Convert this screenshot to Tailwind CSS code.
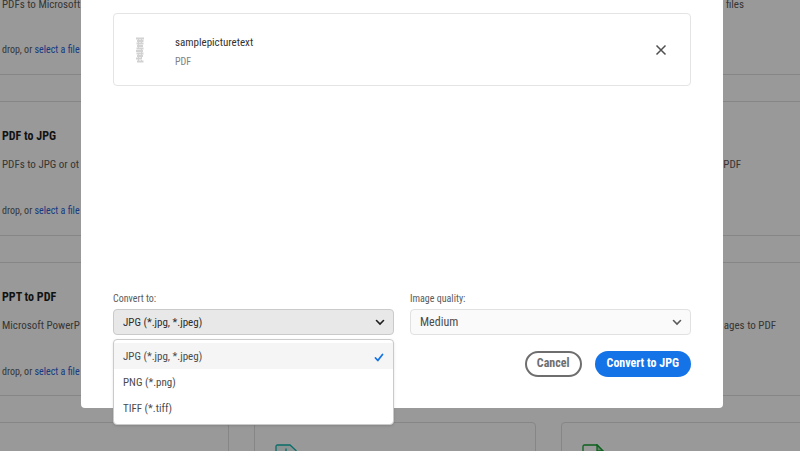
<!DOCTYPE html>
<html lang="en">
<head>
  <meta charset="UTF-8">
  <meta name="viewport" content="width=device-width, initial-scale=1.0">
  <title>Convert to JPG</title>
  <script src="https://cdn.jsdelivr.net/npm/@tailwindcss/browser@4"></script>
</head>
<body class="bg-white text-[#5a5a5a] font-['Roboto_Condensed','Roboto',sans-serif] overflow-hidden">
  <div class="relative h-screen overflow-hidden">

    <!-- Tool cards behind the dialog -->
    <main class="-mt-[60px] -ml-[52px] -mr-[42px] grid grid-cols-3 gap-x-[25px] gap-y-[26px] text-[11px] leading-4">
      <section class="h-[135px] border border-[#e0e0e0] rounded-sm pl-[53px] pt-[56px]">
        <p>PDFs to Microsoft</p>
        <p class="mt-[29px] text-[10px]">drop, or <a href="#" class="text-[#2a62d8]">select a file</a></p>
      </section>
      <section class="h-[135px] border border-[#e0e0e0] rounded-sm"></section>
      <section class="h-[135px] border border-[#e0e0e0] rounded-sm pr-[97px] pt-[56px] text-right">
        <p>files</p>
      </section>

      <section class="h-[135px] border border-[#e0e0e0] rounded-sm pl-[53px] pt-[26px]">
        <h2 class="text-[12px] font-bold text-[#1e1e1e]">PDF to JPG</h2>
        <p class="mt-[13px]">PDFs to JPG or ot</p>
        <p class="mt-[30px] text-[10px]">drop, or <a href="#" class="text-[#2a62d8]">select a file</a></p>
      </section>
      <section class="h-[135px] border border-[#e0e0e0] rounded-sm"></section>
      <section class="h-[135px] border border-[#e0e0e0] rounded-sm pr-[100px] pt-[55px] text-right">
        <p>PDF</p>
      </section>

      <section class="h-[134px] border border-[#e0e0e0] rounded-sm pl-[53px] pt-[26px]">
        <h2 class="text-[12px] font-bold text-[#1e1e1e]">PPT to PDF</h2>
        <p class="mt-[13px]">Microsoft PowerP</p>
        <p class="mt-[30px] text-[10px]">drop, or <a href="#" class="text-[#2a62d8]">select a file</a></p>
      </section>
      <section class="h-[134px] border border-[#e0e0e0] rounded-sm"></section>
      <section class="h-[134px] border border-[#e0e0e0] rounded-sm pr-[65px] pt-[55px] text-right">
        <p>ages to PDF</p>
      </section>

      <section class="h-[135px] border border-[#e0e0e0] rounded-sm"></section>
      <section class="h-[135px] border border-[#e0e0e0] rounded-sm pl-[20px] pt-[21px]">
        <svg class="w-[22px] h-[26px]" viewBox="0 0 22 26" fill="none" stroke="#0fb5ae" stroke-width="1.3">
          <path d="M1 25V2.5Q1 1 2.5 1H15L21 6.5V25Z" fill="#e6f4f3"/>
          <path d="M11 4.5V14M7 10l4 4 4-4"/>
        </svg>
      </section>
      <section class="h-[135px] border border-[#e0e0e0] rounded-sm pl-[20px] pt-[21px]">
        <svg class="w-[22px] h-[26px]" viewBox="0 0 22 26" fill="none" stroke="#12a130" stroke-width="1.3">
          <path d="M1 25V2.5Q1 1 2.5 1H15L21 7V25Z"/>
          <path d="M15 1V7H21Z" fill="#a8dcae"/>
        </svg>
      </section>
    </main>

    <!-- Dialog -->
    <div class="absolute inset-0 bg-black/40">
      <div role="dialog" aria-label="Convert to JPG" class="ml-[81px] mr-[77px] rounded-b-sm bg-white px-8 pt-[13px] pb-[31px]">
        <div class="flex items-center h-[73px] border border-[#e4e4e4] rounded pl-[21px] pr-[23px]">
          <!-- page thumbnail -->
          <svg class="w-[9px] h-[26px]" viewBox="0 0 9 26" fill="none" stroke="#d2d2d2" stroke-width="2">
            <path d="M1 1.5H9M2 4H8.5M1.500 6.5H8.500M2 9H8M1.5 11.5H8.5M1 14H8M1.5 16.5H8.5M2 19H8M1 21.5H7M2 24.5H8.5"/>
            <path d="M3.500 1V25M6.500 2V24" stroke-width="1" stroke-dasharray="2 1"/>
          </svg>
          <div class="ml-[31px] flex-1">
            <p class="mt-[6px] text-[11px] leading-4 text-[#323232]">samplepicturetext</p>
            <p class="mt-[3px] text-[10px] leading-4 text-[#808080]">PDF</p>
          </div>
          <button type="button" aria-label="Remove file">
            <svg class="w-[12px] h-[12px]" viewBox="0 0 12 12" fill="none" stroke="#505050" stroke-width="1.5"><path d="M1.5 1.5l9 9M10.5 1.5l-9 9"/></svg>
          </button>
        </div>

        <div class="mt-[205px] grid grid-cols-2 gap-4">
          <div class="relative">
            <label for="format" class="block text-[10px] leading-4 text-[#5a5a5a]">Convert to:</label>
            <div class="relative mt-[2px]">
              <select id="format" class="block w-full h-[26px] appearance-none rounded border border-[#cacaca] bg-[#e8e8e8] pl-[9px] pt-px text-[11px] leading-4 text-[#2c2c2c]">
                <option>JPG (*.jpg, *.jpeg)</option>
                <option>PNG (*.png)</option>
                <option>TIFF (*.tiff)</option>
              </select>
              <svg class="pointer-events-none absolute right-[9px] top-[10px] w-[10px] h-[7px]" viewBox="0 0 10 7" fill="none" stroke="#1e1e1e" stroke-width="1.6" stroke-linecap="round"><path d="M1.5 1.5L5 5l3.5-3.5"/></svg>
            </div>
            <ul role="listbox" aria-label="Convert to" class="absolute inset-x-0 top-full mt-[4px] rounded border border-[#cacaca] bg-white py-[3px] text-[11px] leading-6 text-[#4b4b4b] shadow-sm">
              <li role="option" aria-selected="true" class="flex items-center justify-between bg-[#f5f5f5] px-[9px] pt-[2px]">
                JPG (*.jpg, *.jpeg)
                <svg class="w-[10px] h-[9px]" viewBox="0 0 10 9" fill="none" stroke="#1473e6" stroke-width="1.8" stroke-linecap="round" stroke-linejoin="round"><path d="M1.5 5L3.8 7.5 8.5 1.5"/></svg>
              </li>
              <li role="option" aria-selected="false" class="px-[9px] pt-[2px]">PNG (*.png)</li>
              <li role="option" aria-selected="false" class="px-[9px] pt-[2px]">TIFF (*.tiff)</li>
            </ul>
          </div>
          <div>
            <label for="quality" class="block text-[10px] leading-4 text-[#5a5a5a]">Image quality:</label>
            <div class="relative mt-[2px]">
              <select id="quality" class="block w-full h-[26px] appearance-none rounded border border-[#e1e1e1] bg-[#fafafa] pl-[9px] text-[12px] leading-4 text-[#4b4b4b]">
                <option>Medium</option>
              </select>
              <svg class="pointer-events-none absolute right-[9px] top-[10px] w-[10px] h-[7px]" viewBox="0 0 10 7" fill="none" stroke="#5a5a5a" stroke-width="1.6" stroke-linecap="round"><path d="M1.5 1.5L5 5l3.5-3.5"/></svg>
            </div>
          </div>
        </div>

        <div class="mt-[16px] flex justify-end gap-[13px] text-[12px] leading-4 font-bold">
          <button type="button" class="h-[26px] rounded-full border-2 border-[#6e6e6e] px-[10px] pb-[3px] text-[#6e6e6e]">Cancel</button>
          <button type="button" class="h-[26px] rounded-full bg-[#1473e6] px-[12px] pb-[3px] text-white">Convert to JPG</button>
        </div>
      </div>
    </div>
  </div>
</body>
</html>
